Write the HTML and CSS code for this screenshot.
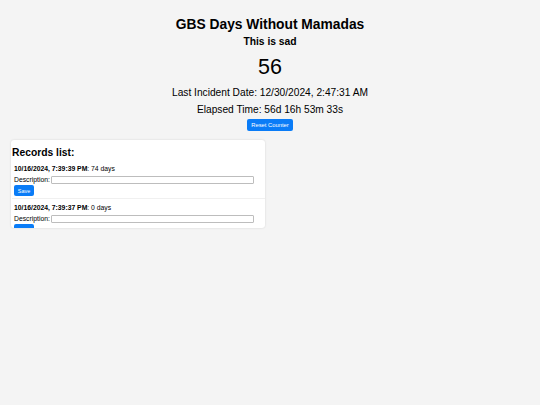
FILE: index.html
```html
<!DOCTYPE html>
<html>
<head>
<meta charset="utf-8">
<link rel="stylesheet" href="styles.css">
</head>
<body>
<div class="header">
  <h1 class="title">GBS Days Without Mamadas</h1>
  <h2 class="subtitle">This is sad</h2>
  <div class="count">56</div>
  <p class="info">Last Incident Date: 12/30/2024, 2:47:31 AM</p>
  <p class="info">Elapsed Time: 56d 16h 53m 33s</p>
  <button class="btn reset">Reset Counter</button>
</div>
<div class="card">
  <h3 class="records-title">Records list:</h3>
  <div class="record">
    <div class="rec-line"><b>10/16/2024, 7:39:39 PM</b>: 74 days</div>
    <div class="desc-row"><label class="desc-label">Description:</label><input class="desc" type="text"></div>
    <button class="btn save">Save</button>
  </div>
  <div class="record">
    <div class="rec-line"><b>10/16/2024, 7:39:37 PM</b>: 0 days</div>
    <div class="desc-row"><label class="desc-label">Description:</label><input class="desc" type="text"></div>
    <button class="btn save">Save</button>
  </div>
</div>
</body>
</html>
```
FILE: styles.css
```css
html, body {
  margin: 0;
  padding: 0;
}
body {
  background: #f4f4f4;
  font-family: "Liberation Sans", Arial, sans-serif;
  color: #000;
  width: 540px;
  height: 405px;
  overflow: hidden;
}
.header {
  display: flex;
  flex-direction: column;
  align-items: center;
  padding-top: 16px;
}
.title {
  margin: 0;
  font-size: 13.8px;
  font-weight: bold;
  line-height: 18px;
}
.subtitle {
  margin: 1px 0 0;
  font-size: 10.3px;
  font-weight: bold;
  line-height: 13px;
}
.count {
  margin-top: 6px;
  font-size: 21.5px;
  line-height: 26px;
}
.info {
  margin: 6px 0 0;
  font-size: 10.2px;
  line-height: 13px;
}
.info + .info {
  margin-top: 4px;
}
.btn {
  background: #0a7cf7;
  color: #fff;
  border: none;
  border-radius: 2px;
  font-family: "Liberation Sans", Arial, sans-serif;
  padding: 0;
  cursor: pointer;
}
.reset {
  margin-top: 3px;
  width: 46px;
  height: 12px;
  font-size: 5.8px;
}
.card {
  margin: 9px 0 0 11px;
  width: 254px;
  height: 88px;
  background: #fff;
  border-radius: 3px;
  box-shadow: 0 0 2px rgba(0,0,0,0.15);
  overflow: hidden;
  box-sizing: border-box;
  padding: 6px 0 0 1px;
}
.records-title {
  margin: 0;
  font-size: 10.3px;
  font-weight: bold;
  line-height: 14px;
}
.record {
  padding: 4px 2px 2px;
  border-bottom: 1px solid #f0f0f0;
  font-size: 6.8px;
}
.rec-line {
  line-height: 10px;
}
.desc-row {
  display: flex;
  align-items: center;
  margin-top: 1px;
  height: 9px;
}
.desc-label {
  width: 37px;
  flex: none;
}
.desc {
  width: 203px;
  height: 8px;
  box-sizing: border-box;
  border: 1px solid #bdbdbd;
  border-radius: 1px;
  padding: 0;
  margin: 0;
}
.save {
  display: block;
  margin-top: 1px;
  width: 20px;
  height: 11px;
  font-size: 5.5px;
}
```
